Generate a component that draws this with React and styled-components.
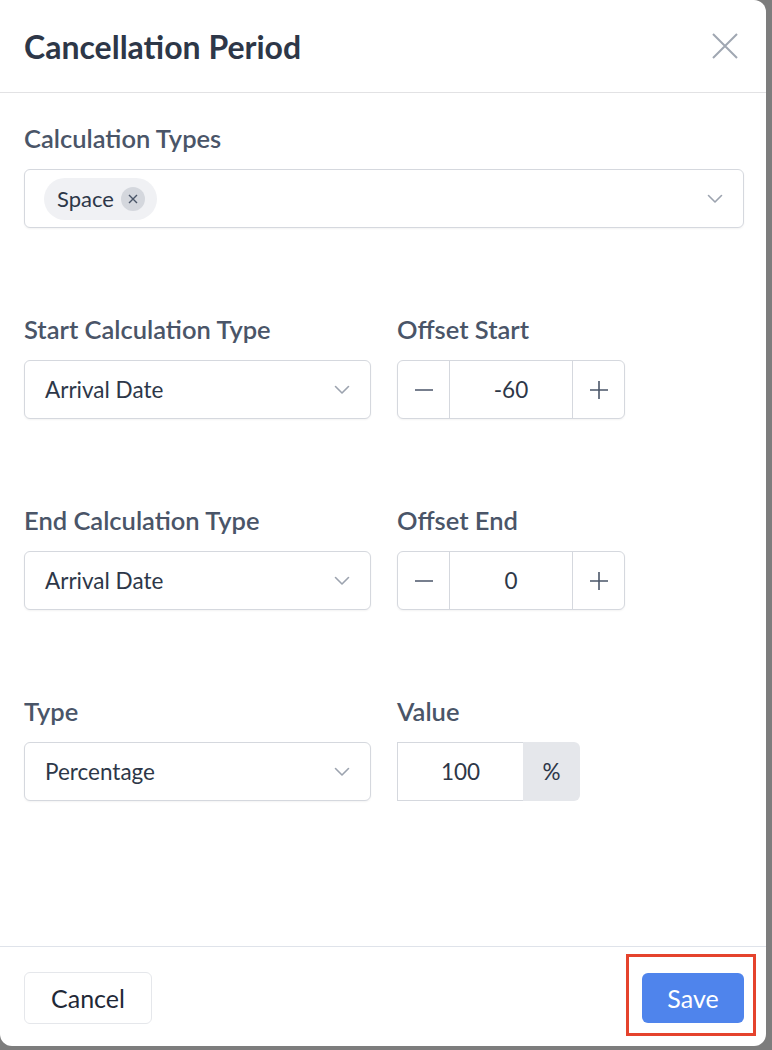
import React, { useState } from 'react';
import styled, { createGlobalStyle } from 'styled-components';

const GlobalStyle = createGlobalStyle`
  html, body {
    margin: 0;
    padding: 0;
    background: #7d7d7d;
  }
  body {
    font-family: Lato, "Open Sans", sans-serif;
  }
`;

function Chevron() {
  return (
    <svg width="16" height="10" viewBox="0 0 16 10" fill="none">
      <path d="M1.5 1.5L8 8l6.5-6.5" stroke="#9ca3af" strokeWidth="1.6" strokeLinecap="round" strokeLinejoin="round" />
    </svg>
  );
}

function Select({ value }) {
  return (
    <SelectBox>
      <SelectText>{value}</SelectText>
      <Chevron />
    </SelectBox>
  );
}

function Stepper({ value }) {
  return (
    <StepperBox>
      <StepButton>
        <svg width="20" height="20" viewBox="0 0 20 20"><path d="M1 10h18" stroke="#4a5568" strokeWidth="1.6" /></svg>
      </StepButton>
      <StepValue>{value}</StepValue>
      <StepButton>
        <svg width="20" height="20" viewBox="0 0 20 20"><path d="M1 10h18M10 1v18" stroke="#4a5568" strokeWidth="1.6" /></svg>
      </StepButton>
    </StepperBox>
  );
}

function App() {
  const [types, setTypes] = useState(['Space']);

  return (
    <>
      <GlobalStyle />
      <Modal>
        <Header>
          <Title>Cancellation Period</Title>
          <CloseButton aria-label="Close">
            <svg width="26" height="26" viewBox="0 0 26 26">
              <path d="M1 1l24 24M25 1L1 25" stroke="#a0a7b2" strokeWidth="2" />
            </svg>
          </CloseButton>
        </Header>

        <Body>
          <Field>
            <Label>Calculation Types</Label>
            <MultiSelect>
              <Chips>
                {types.map((t) => (
                  <Chip key={t}>
                    {t}
                    <ChipRemove onClick={() => setTypes(types.filter((x) => x !== t))}>
                      <svg width="10" height="10" viewBox="0 0 10 10">
                        <path d="M1 1l8 8M9 1L1 9" stroke="#4a5568" strokeWidth="1.4" />
                      </svg>
                    </ChipRemove>
                  </Chip>
                ))}
              </Chips>
              <Chevron />
            </MultiSelect>
          </Field>

          <Row>
            <Field>
              <Label>Start Calculation Type</Label>
              <Select value="Arrival Date" />
            </Field>
            <Field>
              <Label>Offset Start</Label>
              <Stepper value="-60" />
            </Field>
          </Row>

          <Row>
            <Field>
              <Label>End Calculation Type</Label>
              <Select value="Arrival Date" />
            </Field>
            <Field>
              <Label>Offset End</Label>
              <Stepper value="0" />
            </Field>
          </Row>

          <Row>
            <Field>
              <Label>Type</Label>
              <Select value="Percentage" />
            </Field>
            <Field>
              <Label>Value</Label>
              <ValueGroup>
                <ValueInput>100</ValueInput>
                <Addon>%</Addon>
              </ValueGroup>
            </Field>
          </Row>
        </Body>

        <Footer>
          <CancelButton>Cancel</CancelButton>
          <Highlight>
            <SaveButton>Save</SaveButton>
          </Highlight>
        </Footer>
      </Modal>
    </>
  );
}

const Modal = styled.div`
  width: 766px;
  height: 1046px;
  background: #fff;
  border-radius: 0 12px 12px 12px;
  display: flex;
  flex-direction: column;
  box-sizing: border-box;
  overflow: hidden;
`;

const Header = styled.div`
  height: 93px;
  box-sizing: border-box;
  border-bottom: 1px solid #e2e2e4;
  display: flex;
  align-items: center;
  justify-content: space-between;
  padding: 0 28px 0 24px;
`;

const Title = styled.h2`
  margin: 0;
  font-size: 32px;
  font-weight: 700;
  color: #2d3748;
`;

const CloseButton = styled.button`
  background: none;
  border: none;
  padding: 0;
  display: flex;
  cursor: pointer;
`;

const Body = styled.div`
  flex: 1;
  padding: 33px 22px 0 24px;
  display: flex;
  flex-direction: column;
  gap: 89px;
`;

const Row = styled.div`
  display: grid;
  grid-template-columns: 347px 347px;
  column-gap: 26px;
`;

const Field = styled.div`
  display: flex;
  flex-direction: column;
  align-items: flex-start;
`;

const Label = styled.label`
  font-size: 25.5px;
  font-weight: 600;
  color: #4a5568;
  line-height: 24px;
  margin-bottom: 19px;
`;

const inputBox = `
  height: 59px;
  box-sizing: border-box;
  border: 1px solid #d5d8de;
  border-radius: 6px;
  background: #fff;
  box-shadow: 0 1px 2px rgba(0, 0, 0, 0.05);
`;

const MultiSelect = styled.div`
  ${inputBox}
  width: 100%;
  display: flex;
  align-items: center;
  justify-content: space-between;
  padding: 0 20px 0 19px;
`;

const Chips = styled.div`
  display: flex;
  gap: 8px;
`;

const Chip = styled.span`
  display: inline-flex;
  align-items: center;
  gap: 7px;
  height: 42px;
  padding: 0 12px 0 13px;
  border-radius: 21px;
  background: #f0f1f4;
  font-size: 22px;
  color: #2d3748;
`;

const ChipRemove = styled.span`
  width: 24px;
  height: 24px;
  border-radius: 50%;
  background: #d4d7dd;
  display: inline-flex;
  align-items: center;
  justify-content: center;
  cursor: pointer;
`;

const SelectBox = styled.div`
  ${inputBox}
  width: 100%;
  display: flex;
  align-items: center;
  justify-content: space-between;
  padding: 0 20px 0 20px;
`;

const SelectText = styled.span`
  font-size: 22.5px;
  color: #2d3748;
`;

const StepperBox = styled.div`
  ${inputBox}
  width: 228px;
  display: grid;
  grid-template-columns: 51px 1fr 51px;
  overflow: hidden;
`;

const StepButton = styled.div`
  display: flex;
  align-items: center;
  justify-content: center;
  & + div {
    border-left: 1px solid #d5d8de;
  }
`;

const StepValue = styled.div`
  display: flex;
  align-items: center;
  justify-content: center;
  font-size: 22.5px;
  color: #2d3748;
  border-right: 1px solid #d5d8de;
`;

const ValueGroup = styled.div`
  display: flex;
  height: 59px;
`;

const ValueInput = styled.div`
  width: 126px;
  box-sizing: border-box;
  border: 1px solid #d5d8de;
  border-right: none;
  display: flex;
  align-items: center;
  justify-content: center;
  font-size: 22.5px;
  color: #2d3748;
`;

const Addon = styled.div`
  width: 57px;
  background: #e5e7eb;
  border-radius: 0 6px 6px 0;
  display: flex;
  align-items: center;
  justify-content: center;
  font-size: 22.5px;
  color: #2d3748;
`;

const Footer = styled.div`
  height: 100px;
  box-sizing: border-box;
  border-top: 1px solid #dfe3ea;
  display: flex;
  align-items: center;
  justify-content: space-between;
  padding: 2px 22px 0 24px;
`;

const CancelButton = styled.button`
  height: 52px;
  width: 128px;
  border: 1px solid #e5e7eb;
  border-radius: 6px;
  background: #fff;
  font-family: Lato, sans-serif;
  font-size: 25px;
  color: #1f2937;
  cursor: pointer;
`;

const Highlight = styled.div`
  position: relative;
  display: flex;
  &::after {
    content: '';
    position: absolute;
    left: -16px;
    right: -12px;
    top: -19px;
    bottom: -13px;
    border: 3px solid #e5432d;
    pointer-events: none;
  }
`;

const SaveButton = styled.button`
  height: 50px;
  width: 102px;
  border: none;
  border-radius: 6px;
  background: #4f84ec;
  font-family: Lato, sans-serif;
  font-size: 25px;
  color: #fff;
  cursor: pointer;
`;

export default App;
